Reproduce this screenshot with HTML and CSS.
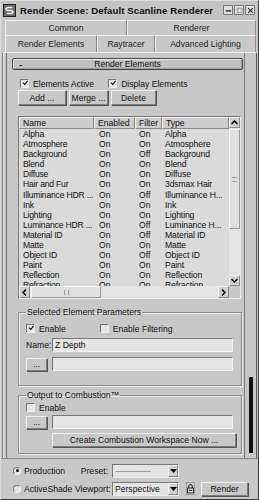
FILE: index.html
```html
<!DOCTYPE html>
<html>
<head>
<meta charset="utf-8">
<link rel="stylesheet" href="styles.css">
</head>
<body>
<div class="win">
  <div class="title">
    <svg class="appicon" width="13" height="13" viewBox="0 0 13 13"><rect x="0.5" y="0.5" width="12" height="12" fill="#6a6a6a" stroke="#222"/><path d="M9.5 3.5 H4 L3 5 L4 6.5 H9 L10 8 L9 9.5 H3.5" fill="none" stroke="#eee" stroke-width="1.6"/></svg>
    <span class="ttext">Render Scene: Default Scanline Renderer</span>
    <div class="wbtns">
      <span class="wb"><svg width="9" height="9" viewBox="0 0 9 9"><rect x="1" y="4" width="7" height="2" fill="#333"/></svg></span>
      <span class="wb"><svg width="9" height="9" viewBox="0 0 9 9"><rect x="1.5" y="1.5" width="6" height="6" fill="none" stroke="#888"/></svg></span>
      <span class="wb"><svg width="9" height="9" viewBox="0 0 9 9"><path d="M1.5 1.5 L7.5 7.5 M7.5 1.5 L1.5 7.5" stroke="#333" stroke-width="1.6"/></svg></span>
    </div>
  </div>

  <div class="tabs">
    <div class="tabrow r1">
      <div class="tab t-common">Common</div>
      <div class="tab t-renderer">Renderer</div>
    </div>
    <div class="tabrow r2">
      <div class="tab active t-re">Render Elements</div>
      <div class="tab t-ray">Raytracer</div>
      <div class="tab t-adv">Advanced Lighting</div>
    </div>
  </div>

  <div class="panel">
    <div class="content">
      <div class="rollhead"><span class="minus">-</span><span class="rtitle">Render Elements</span></div>

      <div class="checks">
        <label class="chk"><span class="box on"></span>Elements Active</label>
        <label class="chk c2"><span class="box on"></span>Display Elements</label>
      </div>

      <div class="btnrow">
        <span class="btn b-add">Add ...</span>
        <span class="btn b-merge">Merge ...</span>
        <span class="btn b-del">Delete</span>
      </div>

      <div class="list">
        <div class="lmain">
          <div class="lcols">
            <div class="lhead">
              <span class="c-name">Name</span><span class="c-en">Enabled</span><span class="c-fi">Filter</span><span class="c-ty">Type</span>
            </div>
            <div class="rows">
              <div class="row"><span class="c-name">Alpha</span><span class="c-en">On</span><span class="c-fi">On</span><span class="c-ty">Alpha</span></div>
              <div class="row"><span class="c-name">Atmosphere</span><span class="c-en">On</span><span class="c-fi">On</span><span class="c-ty">Atmosphere</span></div>
              <div class="row"><span class="c-name">Background</span><span class="c-en">On</span><span class="c-fi">Off</span><span class="c-ty">Background</span></div>
              <div class="row"><span class="c-name">Blend</span><span class="c-en">On</span><span class="c-fi">On</span><span class="c-ty">Blend</span></div>
              <div class="row"><span class="c-name">Diffuse</span><span class="c-en">On</span><span class="c-fi">On</span><span class="c-ty">Diffuse</span></div>
              <div class="row"><span class="c-name">Hair and Fur</span><span class="c-en">On</span><span class="c-fi">On</span><span class="c-ty">3dsmax Hair</span></div>
              <div class="row"><span class="c-name">Illuminance HDR ...</span><span class="c-en">On</span><span class="c-fi">Off</span><span class="c-ty">Illuminance H...</span></div>
              <div class="row"><span class="c-name">Ink</span><span class="c-en">On</span><span class="c-fi">On</span><span class="c-ty">Ink</span></div>
              <div class="row"><span class="c-name">Lighting</span><span class="c-en">On</span><span class="c-fi">On</span><span class="c-ty">Lighting</span></div>
              <div class="row"><span class="c-name">Luminance HDR ...</span><span class="c-en">On</span><span class="c-fi">Off</span><span class="c-ty">Luminance H...</span></div>
              <div class="row"><span class="c-name">Material ID</span><span class="c-en">On</span><span class="c-fi">Off</span><span class="c-ty">Material ID</span></div>
              <div class="row"><span class="c-name">Matte</span><span class="c-en">On</span><span class="c-fi">On</span><span class="c-ty">Matte</span></div>
              <div class="row"><span class="c-name">Object ID</span><span class="c-en">On</span><span class="c-fi">Off</span><span class="c-ty">Object ID</span></div>
              <div class="row"><span class="c-name">Paint</span><span class="c-en">On</span><span class="c-fi">On</span><span class="c-ty">Paint</span></div>
              <div class="row"><span class="c-name">Reflection</span><span class="c-en">On</span><span class="c-fi">On</span><span class="c-ty">Reflection</span></div>
              <div class="row"><span class="c-name">Refraction</span><span class="c-en">On</span><span class="c-fi">On</span><span class="c-ty">Refraction</span></div>
            </div>
          </div>
          <div class="vscroll">
            <span class="sbtn"><svg width="7" height="5" viewBox="0 0 7 5"><path d="M0.5 4 L3.5 1 L6.5 4" fill="none" stroke="#000" stroke-width="1.5"/></svg></span>
            <div class="vtrack"><div class="vthumb"><span class="grip-h"></span></div></div>
            <span class="sbtn"><svg width="7" height="5" viewBox="0 0 7 5"><path d="M0.5 1 L3.5 4 L6.5 1" fill="none" stroke="#000" stroke-width="1.5"/></svg></span>
          </div>
        </div>
        <div class="hscroll">
          <span class="sbtn h"><svg width="5" height="7" viewBox="0 0 5 7"><path d="M4 0.5 L1 3.5 L4 6.5" fill="none" stroke="#000" stroke-width="1.5"/></svg></span>
          <div class="htrack"><div class="hthumb"><span class="grip-v"></span></div></div>
          <span class="sbtn h"><svg width="5" height="7" viewBox="0 0 5 7"><path d="M1 0.5 L4 3.5 L1 6.5" fill="none" stroke="#000" stroke-width="1.5"/></svg></span>
          <span class="corner"></span>
        </div>
      </div>

      <fieldset class="group g1">
        <legend>Selected Element Parameters</legend>
        <div class="grow">
          <label class="chk"><span class="box on"></span>Enable</label>
          <label class="chk c2b"><span class="box"></span>Enable Filtering</label>
        </div>
        <div class="grow namerow">
          <span class="lbl">Name:</span><span class="field">Z Depth</span>
        </div>
        <div class="grow pathrow">
          <span class="btn dots">...</span><span class="field"></span>
        </div>
      </fieldset>

      <fieldset class="group g2">
        <legend>Output to Combustion™</legend>
        <div class="grow">
          <label class="chk"><span class="box"></span>Enable</label>
        </div>
        <div class="grow pathrow">
          <span class="btn dots">...</span><span class="field"></span>
        </div>
        <div class="grow createrow">
          <span class="btn create">Create Combustion Workspace Now ...</span>
        </div>
      </fieldset>
    </div>
    <div class="pscroll"><div class="pthumb"></div></div>
  </div>

  <div class="bottom">
    <div class="brow">
      <label class="radio"><span class="rdot on"></span>Production</label>
      <span class="blbl l-preset">Preset:</span>
      <span class="combo"><span class="ctext dashed">-------------------</span><span class="cbtn"><svg width="7" height="4" viewBox="0 0 7 4"><path d="M0 0 H7 L3.5 4 Z" fill="#000"/></svg></span></span>
    </div>
    <div class="brow">
      <label class="radio"><span class="rdot"></span>ActiveShade</label>
      <span class="blbl l-vp">Viewport:</span>
      <span class="combo"><span class="ctext">Perspective</span><span class="cbtn"><svg width="7" height="4" viewBox="0 0 7 4"><path d="M0 0 H7 L3.5 4 Z" fill="#000"/></svg></span></span>
      <span class="lock"><svg width="8" height="11" viewBox="0 0 8 11"><path d="M2 5 V3 A2 2 0 0 1 6 3 V5" fill="none" stroke="#222" stroke-width="1.2"/><rect x="0.5" y="5" width="7" height="5.5" fill="#ddd" stroke="#222"/><rect x="2" y="7" width="4" height="1.2" fill="#222"/></svg></span>
      <span class="btn render">Render</span>
    </div>
  </div>
</div>
</body>
</html>
```

FILE: styles.css
```css
* { box-sizing: border-box; }
html, body { margin: 0; padding: 0; background: #c8c8c8; }
body {
  font-family: "Liberation Sans", Arial, sans-serif;
  font-size: 8.6px;
  color: #111;
  width: 259px;
  height: 500px;
  overflow: hidden;
}
.win {
  width: 259px;
  height: 500px;
  background: #c8c8c8;
  border: 1px solid #3a3a3a;
  border-top-color: #dcdcdc;
  border-left-color: #dcdcdc;
  display: flex;
  flex-direction: column;
}

/* title */
.title {
  height: 18px;
  display: flex;
  align-items: center;
  padding: 0 3px 0 2px;
  background: #c4c4c4;
}
.appicon { flex: none; margin-right: 4px; }
.ttext {
  font-weight: bold;
  font-size: 9.6px;
  letter-spacing: 0.1px;
  color: #101010;
  white-space: nowrap;
}
.wbtns { margin-left: auto; display: flex; gap: 1px; }
.wb {
  width: 10px; height: 10px;
  background: #e0e0e0;
  border: 1px solid #777;
  display: flex; align-items: center; justify-content: center;
}
.wb svg { width: 7px; height: 7px; }

/* tabs */
.tabs { padding: 1px 2px 0 4px; }
.tabrow { display: flex; }
.tab {
  display: flex; align-items: center; justify-content: center;
  border: 1px solid #8a8a8a;
  border-top-color: #eeeeee;
  border-left-color: #eeeeee;
  border-bottom: none;
  white-space: nowrap;
  color: #222;
}
.r1 { height: 15px; }
.r2 { height: 17px; }
.t-common { width: 122px; }
.t-renderer { flex: 1; }
.t-re { width: 92px; }
.t-ray { width: 58px; }
.t-adv { flex: 1; }

/* panel */
.panel {
  height: 406px;
  display: flex;
  border-top: 1px solid #eee;
  margin: 0 1px 0 1px;
  border-left: 1px solid #7a7a7a;
  padding-left: 3px;
  box-shadow: inset 1px 0 0 #eaeaea;
}
.content {
  width: 237px;
  padding: 5px 0 0 4px;
  border-left: 1px solid #7a7a7a;
}
.pscroll {
  width: 13px;
  margin-left: 1px;
  border-left: 1px solid #7a7a7a;
  border-right: 1px solid #555;
  display: flex;
  justify-content: center;
  padding-top: 324px;
}
.pthumb { width: 4px; height: 76px; background: #111; }

.rollhead {
  height: 12px;
  width: 231px;
  margin-left: 1px;
  border: 1px solid #444;
  border-radius: 2px;
  box-shadow: inset 1px 1px 0 #eee, inset -1px -1px 0 #999;
  background: #c0c0c0;
  display: flex;
  align-items: center;
}
.minus { width: 14px; padding-left: 6px; font-size: 10px; }
.rtitle { flex: 1; text-align: center; margin-right: 14px; }

.checks { display: flex; height: 11px; margin-top: 8px; align-items: center; padding-left: 9px; }
.chk { display: flex; align-items: center; white-space: nowrap; }
.box {
  width: 9px; height: 9px;
  border: 1px solid #777;
  border-right-color: #eee; border-bottom-color: #eee;
  background: #e6e6e6;
  margin-right: 4px;
  position: relative;
}
.box.on::after {
  content: "";
  position: absolute;
  left: 1px; top: 0px;
  width: 4px; height: 2px;
  border-left: 1.5px solid #000;
  border-bottom: 1.5px solid #000;
  transform: rotate(-50deg) translate(0px, 1px);
}
.c2 { margin-left: 14px; }

.btnrow { display: flex; height: 15px; margin-top: 1px; padding-left: 7px; gap: 3px; }
.btn {
  display: flex; align-items: center; justify-content: center;
  border: 1px solid #7c7c7c;
  border-top-color: #f0f0f0;
  border-left-color: #f0f0f0;
  box-shadow: 1px 1px 0 #555;
  background: #c8c8c8;
  white-space: nowrap;
}
.b-add { width: 48px; }
.b-merge { width: 39px; }
.b-del { width: 45px; }

/* list */
.list {
  margin: 11px 0 0 7px;
  width: 223px;
  height: 183px;
  border: 1px solid #777;
  border-right-color: #eee;
  border-bottom-color: #eee;
  background: #dadada;
  display: flex;
  flex-direction: column;
}
.lmain { display: flex; height: 169px; }
.lcols { width: 210px; overflow: hidden; }
.lhead { display: flex; height: 12px; }
.lhead span {
  border: 1px solid #888;
  border-top-color: #f2f2f2;
  border-left-color: #f2f2f2;
  background: #cdcdcd;
  display: flex; align-items: center;
  padding-left: 3px;
}
.c-name { width: 75px; flex: none; }
.c-en { width: 41px; flex: none; }
.c-fi { width: 27px; flex: none; }
.c-ty { width: 67px; flex: none; }
.rows { height: 157px; overflow: hidden; }
.row { display: flex; height: 10.1px; line-height: 10px; white-space: nowrap; }
.row .c-name { padding-left: 4px; letter-spacing: -0.2px; }
.row .c-en { padding-left: 5px; }
.row .c-fi { padding-left: 4px; }
.row .c-ty { padding-left: 3px; overflow: hidden; letter-spacing: -0.1px; }

.vscroll { width: 11px; display: flex; flex-direction: column; }
.sbtn {
  width: 11px; height: 11px; flex: none;
  display: flex; align-items: center; justify-content: center;
  border: 1px solid #888;
  border-top-color: #f2f2f2;
  border-left-color: #f2f2f2;
  background: #d0d0d0;
}
.vtrack { flex: 1; background: #e4e4e4; padding-top: 1px; }
.vthumb {
  height: 100px;
  border: 1px solid #999;
  border-top-color: #fafafa; border-left-color: #fafafa;
  background: #e0e0e0;
  display: flex; align-items: center; justify-content: center;
}
.grip-h { width: 5px; height: 5px; border-top: 1px solid #999; border-bottom: 1px solid #999; }

.hscroll { display: flex; height: 12px; }
.sbtn.h { height: 12px; }
.htrack { width: 188px; background: #e4e4e4; padding-left: 1px; }
.hthumb {
  width: 70px; height: 12px;
  border: 1px solid #999;
  border-top-color: #fafafa; border-left-color: #fafafa;
  background: #e0e0e0;
  display: flex; align-items: center; justify-content: center;
}
.grip-v { width: 5px; height: 5px; border-left: 1px solid #999; border-right: 1px solid #999; }
.corner { width: 11px; background: #c8c8c8; }

/* groups */
.group {
  margin: 8px 0 0 7px;
  width: 224px;
  padding: 0 0 0 7px;
  border: 1px solid #8a8a8a;
  box-shadow: inset 1px 1px 0 #eee, 1px 1px 0 #eee;
  min-width: 0;
}
.group legend { padding: 0 1px; margin-left: 0; line-height: 10px; }
.g1 { height: 79px; }
.g2 { height: 64px; margin-top: 4px; }
.grow { display: flex; align-items: center; }
.g1 .grow:first-of-type { margin-top: 6px; height: 11px; }
.c2b { margin-left: 34px; }
.namerow { margin-top: 4px; height: 14px; }
.lbl { width: 26px; }
.field {
  width: 181px; height: 14px;
  border: 1px solid #777;
  border-right-color: #f2f2f2;
  border-bottom-color: #f2f2f2;
  background: #e4e4e4;
  padding-left: 2px;
  display: flex; align-items: center;
}
.pathrow { margin-top: 5px; height: 14px; }
.dots { width: 21px; height: 13px; margin-right: 5px; }
.g2 .grow:first-of-type { margin-top: 2px; height: 11px; }
.g2 .pathrow { margin-top: 2px; }
.createrow { margin-top: 4px; padding-left: 26px; }
.create { width: 184px; height: 14px; }

/* bottom */
.bottom {
  flex: 1;
  border-top: 1px solid #888;
  padding: 1px 0 0 12px;
}
.brow { display: flex; align-items: center; height: 15px; margin-top: 3px; }
.brow + .brow { margin-top: 3px; }
.radio { display: flex; align-items: center; width: 62px; white-space: nowrap; }
.rdot {
  width: 8px; height: 8px; border-radius: 50%;
  border: 1px solid #777;
  border-right-color: #eee; border-bottom-color: #eee;
  background: #e6e6e6;
  margin-right: 3px;
  position: relative;
}
.rdot.on::after {
  content: ""; position: absolute; left: 1.5px; top: 1.5px;
  width: 3px; height: 3px; border-radius: 50%; background: #000;
}
.blbl { width: 37px; text-align: right; padding-right: 2px; white-space: nowrap; }
.l-preset { padding-right: 4px; }
.combo {
  width: 67px; height: 14px;
  border: 1px solid #777;
  border-right-color: #eee; border-bottom-color: #eee;
  background: #e4e4e4;
  display: flex;
}
.ctext { flex: 1; padding-left: 2px; display: flex; align-items: center; overflow: hidden; white-space: nowrap; }
.dashed { color: #888; letter-spacing: -1px; }
.cbtn {
  width: 10px;
  border: 1px solid #888;
  border-top-color: #f2f2f2; border-left-color: #f2f2f2;
  background: #d0d0d0;
  display: flex; align-items: center; justify-content: center;
}
.lock {
  margin-left: 7px;
  width: 9px; height: 13px;
  display: flex; align-items: center; justify-content: center;
  border: 1px solid #999;
  background: #ccc;
}
.render { width: 47px; height: 14px; margin-left: 6px; }
```
